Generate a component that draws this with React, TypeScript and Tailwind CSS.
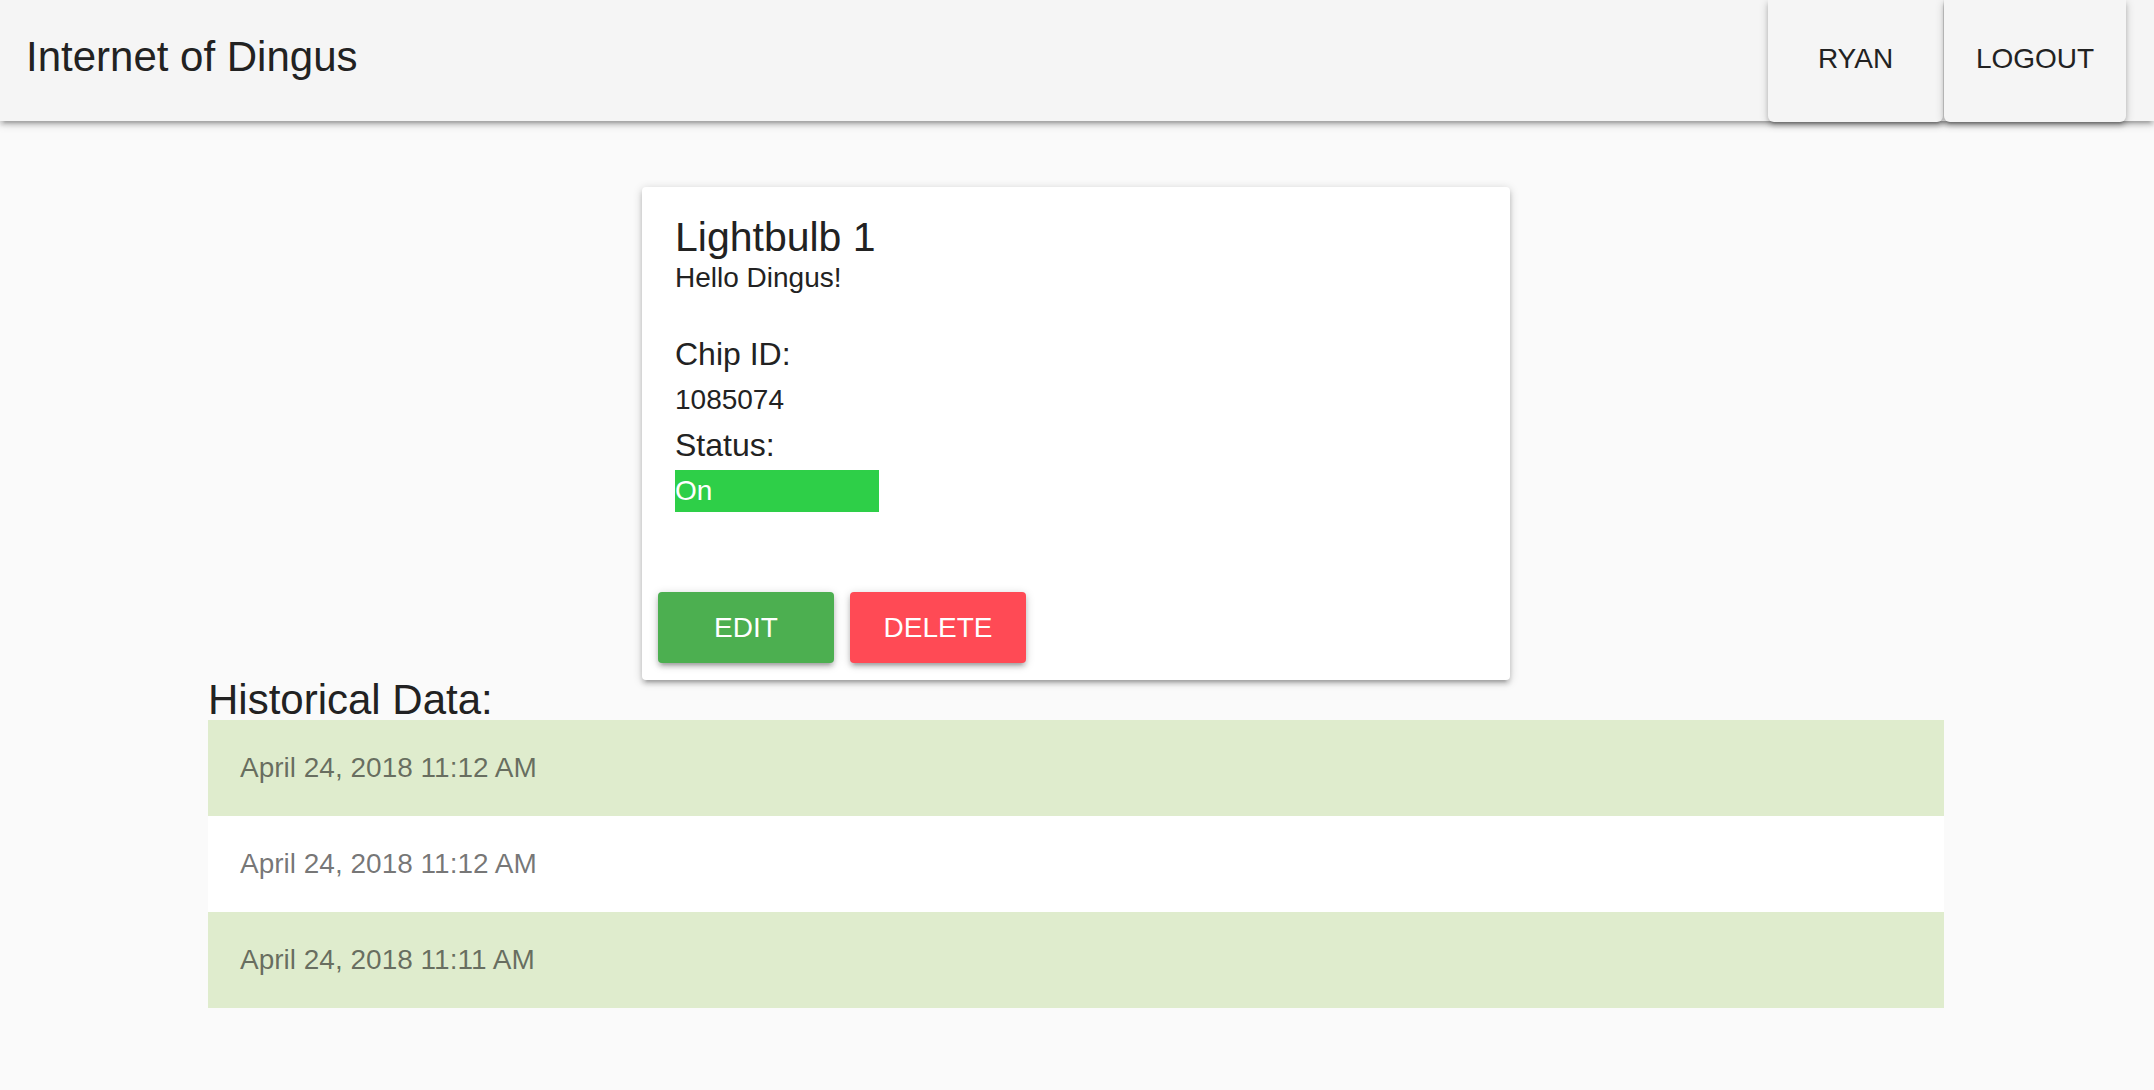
import React from "react";

const history = [
  { at: "April 24, 2018 11:12 AM", on: true },
  { at: "April 24, 2018 11:12 AM", on: false },
  { at: "April 24, 2018 11:11 AM", on: true },
];

const depth =
  "shadow-[0_4px_4px_0_rgba(0,0,0,0.14),0_6px_2px_-4px_rgba(0,0,0,0.12),0_2px_10px_0_rgba(0,0,0,0.2)]";

const App = () => {
  return (
    <div className="min-h-screen bg-[#fafafa] text-black/85 font-['Liberation_Sans',Arial,sans-serif]">
      <nav className={`relative z-10 h-[121px] bg-[#f5f5f5] flex items-start justify-between ${depth}`}>
        <div className="h-full flex items-center pl-[26px]">
          <span className="text-[42px] leading-[48px] mb-[8px] text-[#222]">Internet of Dingus</span>
        </div>
        <div className="h-[122px] flex mr-[28px] gap-[1px]">
          <button className={`w-[175px] h-full bg-[#f5f5f5] rounded-b-[6px] text-[28px] leading-[32px] pb-[4px] text-[#222] ${depth}`}>
            RYAN
          </button>
          <button className={`w-[182px] h-full bg-[#f5f5f5] rounded-b-[6px] text-[28px] leading-[32px] pb-[4px] text-[#222] ${depth}`}>
            LOGOUT
          </button>
        </div>
      </nav>

      <main className="w-[1736px] ml-[208px] pt-[66px]">
        <div className={`w-1/2 mx-auto bg-white rounded-[4px] ${depth}`}>
          <div className="px-[33px] pt-[25px]">
            <div className="text-[41px] leading-[50px] text-[#222]">Lightbulb 1</div>
            <div className="text-[28px] leading-[32px] text-[#222]">Hello Dingus!</div>
            <div className="mt-[42px] text-[32px] leading-[36px] text-[#222]">Chip ID:</div>
            <div className="mt-[12px] text-[28px] leading-[32px] text-[#222]">1085074</div>
            <div className="mt-[11px] text-[32px] leading-[36px] text-[#222]">Status:</div>
            <div className="mt-[7px] w-[204px] h-[42px] bg-[#2ecf48] text-white text-[28px] leading-[42px]">On</div>
          </div>
          <div className="flex gap-[16px] px-[16px] pt-[80px] pb-[17px]">
            <button className={`w-[176px] h-[71px] rounded-[4px] bg-[#4caf50] text-white text-[28px] ${depth}`}>EDIT</button>
            <button className={`w-[176px] h-[71px] rounded-[4px] bg-[#ff4a55] text-white text-[28px] ${depth}`}>DELETE</button>
          </div>
        </div>

        <h2 className="text-[42px] leading-[40px] text-[#222]">Historical Data:</h2>
        <div>
          {history.map((h, i) => (
            <div
              key={i}
              className={`h-[96px] flex items-center px-[32px] text-[28px] text-black/55 ${h.on ? "bg-[#dfeccd]" : "bg-white"}`}
            >
              {h.at}
            </div>
          ))}
        </div>
      </main>
    </div>
  );
};

export default App;
